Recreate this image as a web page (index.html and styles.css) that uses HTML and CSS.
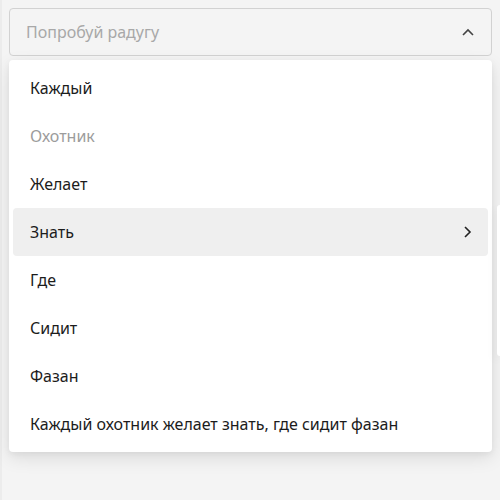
FILE: index.html
```html
<!DOCTYPE html>
<html lang="ru">
<head>
<meta charset="utf-8">
<link rel="stylesheet" href="styles.css">
</head>
<body>
<div class="page">
  <div class="select">
    <span class="placeholder">Попробуй радугу</span>
    <svg class="caret" width="14" height="10" viewBox="0 0 14 10"><path d="M2 8 L7 3 L12 8" fill="none" stroke="#444" stroke-width="1.6"/></svg>
  </div>
  <div class="menu">
    <div class="item">Каждый</div>
    <div class="item disabled">Охотник</div>
    <div class="item">Желает</div>
    <div class="item active">Знать
      <svg class="arrow" width="10" height="14" viewBox="0 0 10 14"><path d="M3 2 L8 7 L3 12" fill="none" stroke="#222" stroke-width="1.6"/></svg>
    </div>
    <div class="item">Где</div>
    <div class="item">Сидит</div>
    <div class="item">Фазан</div>
    <div class="item">Каждый охотник желает знать, где сидит фазан</div>
  </div>
  <div class="submenu"></div>
</div>
</body>
</html>
```
FILE: styles.css
```css
html, body {
  margin: 0;
  padding: 0;
  background: #f4f4f4;
}
body {
  font-family: "Noto Sans", "DejaVu Sans", sans-serif;
  width: 500px;
  height: 500px;
  overflow: hidden;
  box-shadow: inset 2px 0 0 #ececec;
}
.page {
  position: relative;
  padding: 8px 8px 0 9px;
  display: flex;
  flex-direction: column;
  gap: 4px;
}
.select {
  height: 46px;
  border: 1px solid #d2d2d2;
  border-radius: 4px;
  background: #f4f4f4;
  display: flex;
  align-items: center;
  justify-content: space-between;
  padding: 0 16px 0 16px;
}
.placeholder {
  color: #a8a8a8;
  font-size: 16px;
}
.caret { display: block; }
.menu {
  background: #fff;
  border-radius: 4px;
  box-shadow: 0 6px 18px rgba(0,0,0,0.10), 0 2px 6px rgba(0,0,0,0.05);
  padding: 4px;
  display: flex;
  flex-direction: column;
  position: relative;
  z-index: 1;
}
.item {
  height: 48px;
  display: flex;
  align-items: center;
  justify-content: space-between;
  padding: 0 16px 0 17px;
  font-size: 16px;
  color: #1c1c1c;
  border-radius: 4px;
}
.item.disabled { color: #9c9c9c; }
.item.active { background: #efefef; }
.arrow { display: block; }
.submenu {
  position: absolute;
  left: 497px;
  top: 205px;
  width: 3px;
  height: 151px;
  background: #fff;
  border-radius: 4px 0 0 4px;
  box-shadow: -2px 4px 10px rgba(0,0,0,0.08);
  z-index: 2;
}
```
